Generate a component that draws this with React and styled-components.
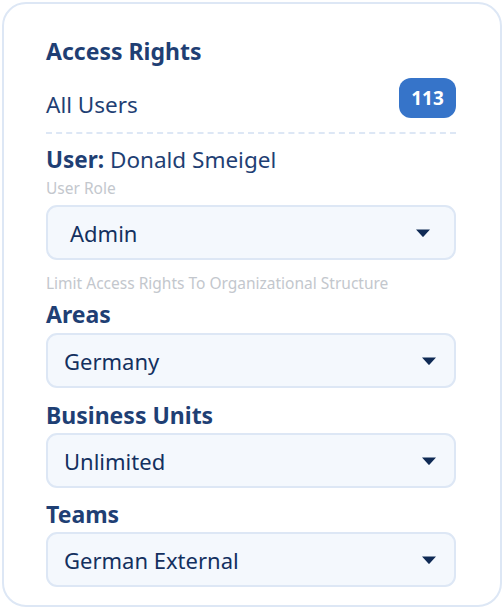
import styled, { createGlobalStyle } from "styled-components";

const GlobalStyle = createGlobalStyle`
  * { box-sizing: border-box; }
  body {
    margin: 0;
    background: #ffffff;
    font-family: "Noto Sans", "Open Sans", sans-serif;
  }
`;

const Card = styled.section`
  margin: 2px;
  min-height: 604px;
  border: 2px solid #dde7f5;
  border-radius: 24px;
  padding: 34px 44px 18px 42px;
  display: flex;
  flex-direction: column;
  background: #ffffff;
`;

const Title = styled.h2`
  margin: 0;
  font-size: 23px;
  line-height: 26px;
  font-weight: 700;
  color: #1f3f74;
`;

const UsersRow = styled.div`
  margin-top: 14px;
  display: flex;
  align-items: flex-end;
  justify-content: space-between;
  height: 40px;
`;

const UsersLabel = styled.span`
  font-size: 22.5px;
  line-height: 26px;
  color: #1f3f74;
`;

const Badge = styled.span`
  height: 40px;
  min-width: 57px;
  padding: 0 10px;
  border-radius: 12px;
  background: #3674c9;
  color: #ffffff;
  font-size: 19px;
  font-weight: 700;
  display: flex;
  align-items: center;
  justify-content: center;
  align-self: flex-start;
`;

const Divider = styled.hr`
  margin: 14px 0 0;
  border: 0;
  border-top: 2px dashed #dde7f5;
`;

const UserLine = styled.div`
  margin-top: 14px;
  font-size: 22.5px;
  line-height: 24px;
  color: #1f3f74;
  b { font-weight: 700; }
`;

const Hint = styled.div`
  margin-top: ${(p) => p.$gap}px;
  font-size: 15.5px;
  line-height: 18px;
  color: #c3c7cd;
`;

const FieldLabel = styled.div`
  margin-top: ${(p) => p.$gap}px;
  font-size: 23px;
  line-height: 26px;
  font-weight: 700;
  color: #1f3f74;
`;

const Select = styled.div`
  margin-top: ${(p) => p.$gap}px;
  height: 55px;
  border: 2px solid #dde7f5;
  border-radius: 11px;
  background: #f4f8fd;
  display: flex;
  align-items: center;
  justify-content: space-between;
  padding: 0 ${(p) => (p.$wide ? 23 : 17)}px 0 ${(p) => (p.$wide ? 22 : 16)}px;
  color: #13305f;
  font-size: 22px;
  cursor: pointer;
`;

const Caret = () => (
  <svg width="16" height="10" viewBox="0 0 16 10" aria-hidden="true">
    <path d="M1 1.5h14L8.6 8.6a0.8 0.8 0 0 1-1.2 0z" fill="#0f2a55" />
  </svg>
);

const Dropdown = ({ value, gap, wide }) => (
  <Select $gap={gap} $wide={wide}>
    <span>{value}</span>
    <Caret />
  </Select>
);

export default function App() {
  return (
    <>
      <GlobalStyle />
      <Card>
        <Title>Access Rights</Title>
        <UsersRow>
          <UsersLabel>All Users</UsersLabel>
          <Badge>113</Badge>
        </UsersRow>
        <Divider />
        <UserLine>
          <b>User:</b> Donald Smeigel
        </UserLine>
        <Hint $gap={7}>User Role</Hint>
        <Dropdown value="Admin" gap={8} wide />
        <Hint $gap={14}>Limit Access Rights To Organizational Structure</Hint>
        <FieldLabel $gap={9}>Areas</FieldLabel>
        <Dropdown value="Germany" gap={6} />
        <FieldLabel $gap={14}>Business Units</FieldLabel>
        <Dropdown value="Unlimited" gap={5} />
        <FieldLabel $gap={13}>Teams</FieldLabel>
        <Dropdown value="German External" gap={5} />
      </Card>
    </>
  );
}
